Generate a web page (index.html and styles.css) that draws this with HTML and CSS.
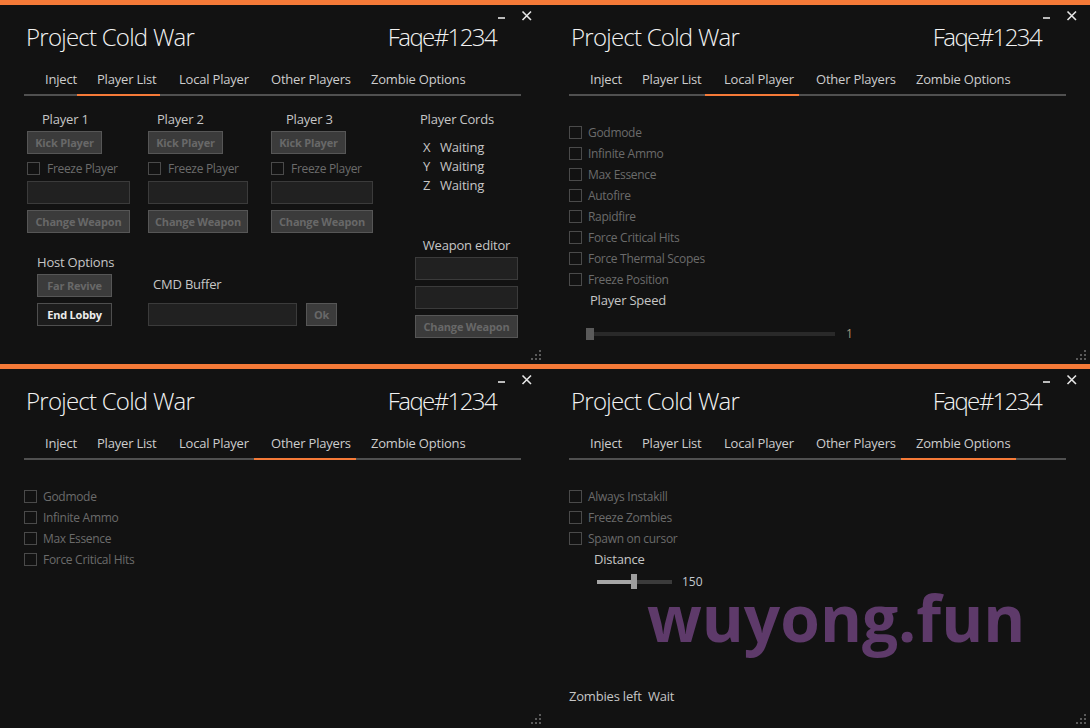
FILE: index.html
```html
<!DOCTYPE html>
<html>
<head>
<meta charset="utf-8">
<link rel="stylesheet" href="styles.css">
</head>
<body>
<div class="screen">

  <!-- Window 1: Player List -->
  <div class="win">
    <div class="wc"><svg width="36" height="17" viewBox="0 0 36 17"><line x1="2" y1="13" x2="9" y2="13" stroke="#e6e6e6" stroke-width="1.6"/><path d="M26.5 6.5 L35 15 M35 6.5 L26.5 15" stroke="#e6e6e6" stroke-width="1.6"/></svg></div>
    <div class="head"><span class="ttl">Project Cold War</span><span class="usr">Faqe#1234</span></div>
    <div class="tabs">
      <span class="tab">Inject</span><span class="tab on">Player List</span><span class="tab">Local Player</span><span class="tab">Other Players</span><span class="tab">Zombie Options</span>
    </div>
    <div class="pl">
      <div class="pl-main">
        <div class="players">
          <div class="pcol c1">
            <div class="lbl">Player 1</div>
            <div class="btn kick">Kick Player</div>
            <div class="ck tight"><span class="box"></span>Freeze Player</div>
            <div class="inp"></div>
            <div class="btn cw">Change Weapon</div>
          </div>
          <div class="pcol c2">
            <div class="lbl">Player 2</div>
            <div class="btn kick">Kick Player</div>
            <div class="ck tight"><span class="box"></span>Freeze Player</div>
            <div class="inp"></div>
            <div class="btn cw">Change Weapon</div>
          </div>
          <div class="pcol c3">
            <div class="lbl">Player 3</div>
            <div class="btn kick">Kick Player</div>
            <div class="ck tight"><span class="box"></span>Freeze Player</div>
            <div class="inp"></div>
            <div class="btn cw">Change Weapon</div>
          </div>
        </div>
        <div class="lower">
          <div class="host">
            <div class="lbl plain">Host Options</div>
            <div class="btn hbtn">Far Revive</div>
            <div class="btn hbtn live">End Lobby</div>
          </div>
          <div class="cmd">
            <div class="lbl cmdl">CMD Buffer</div>
            <div class="cmdrow"><div class="inp cmdin"></div><div class="btn ok">Ok</div></div>
          </div>
        </div>
      </div>
      <div class="side">
        <div class="lbl cords">Player Cords</div>
        <div class="coords">
          <div class="crow"><span class="ax">X</span>Waiting</div>
          <div class="crow"><span class="ax">Y</span>Waiting</div>
          <div class="crow"><span class="ax">Z</span>Waiting</div>
        </div>
        <div class="lbl wed">Weapon editor</div>
        <div class="inp w1"></div>
        <div class="inp w2"></div>
        <div class="btn w3">Change Weapon</div>
      </div>
    </div>
    <svg class="grip" width="12" height="12" viewBox="0 0 12 12"><g fill="#5a5a5a"><rect x="9" y="1" width="2" height="2"/><rect x="5" y="5" width="2" height="2"/><rect x="9" y="5" width="2" height="2"/><rect x="1" y="9" width="2" height="2"/><rect x="5" y="9" width="2" height="2"/><rect x="9" y="9" width="2" height="2"/></g></svg>
  </div>

  <!-- Window 2: Local Player -->
  <div class="win">
    <div class="wc"><svg width="36" height="17" viewBox="0 0 36 17"><line x1="2" y1="13" x2="9" y2="13" stroke="#e6e6e6" stroke-width="1.6"/><path d="M26.5 6.5 L35 15 M35 6.5 L26.5 15" stroke="#e6e6e6" stroke-width="1.6"/></svg></div>
    <div class="head"><span class="ttl">Project Cold War</span><span class="usr">Faqe#1234</span></div>
    <div class="tabs">
      <span class="tab">Inject</span><span class="tab">Player List</span><span class="tab on">Local Player</span><span class="tab">Other Players</span><span class="tab">Zombie Options</span>
    </div>
    <div class="checks">
      <div class="ck"><span class="box"></span>Godmode</div>
      <div class="ck"><span class="box"></span>Infinite Ammo</div>
      <div class="ck"><span class="box"></span>Max Essence</div>
      <div class="ck"><span class="box"></span>Autofire</div>
      <div class="ck"><span class="box"></span>Rapidfire</div>
      <div class="ck"><span class="box"></span>Force Critical Hits</div>
      <div class="ck"><span class="box"></span>Force Thermal Scopes</div>
      <div class="ck"><span class="box"></span>Freeze Position</div>
    </div>
    <div class="lbl speedl">Player Speed</div>
    <div class="slider speed">
      <span class="thumb"></span><span class="rest"></span><span class="val tan">1</span>
    </div>
    <svg class="grip" width="12" height="12" viewBox="0 0 12 12"><g fill="#5a5a5a"><rect x="9" y="1" width="2" height="2"/><rect x="5" y="5" width="2" height="2"/><rect x="9" y="5" width="2" height="2"/><rect x="1" y="9" width="2" height="2"/><rect x="5" y="9" width="2" height="2"/><rect x="9" y="9" width="2" height="2"/></g></svg>
  </div>

  <!-- Window 3: Other Players -->
  <div class="win">
    <div class="wc"><svg width="36" height="17" viewBox="0 0 36 17"><line x1="2" y1="13" x2="9" y2="13" stroke="#e6e6e6" stroke-width="1.6"/><path d="M26.5 6.5 L35 15 M35 6.5 L26.5 15" stroke="#e6e6e6" stroke-width="1.6"/></svg></div>
    <div class="head"><span class="ttl">Project Cold War</span><span class="usr">Faqe#1234</span></div>
    <div class="tabs">
      <span class="tab">Inject</span><span class="tab">Player List</span><span class="tab">Local Player</span><span class="tab on">Other Players</span><span class="tab">Zombie Options</span>
    </div>
    <div class="checks">
      <div class="ck"><span class="box"></span>Godmode</div>
      <div class="ck"><span class="box"></span>Infinite Ammo</div>
      <div class="ck"><span class="box"></span>Max Essence</div>
      <div class="ck"><span class="box"></span>Force Critical Hits</div>
    </div>
    <svg class="grip" width="12" height="12" viewBox="0 0 12 12"><g fill="#5a5a5a"><rect x="9" y="1" width="2" height="2"/><rect x="5" y="5" width="2" height="2"/><rect x="9" y="5" width="2" height="2"/><rect x="1" y="9" width="2" height="2"/><rect x="5" y="9" width="2" height="2"/><rect x="9" y="9" width="2" height="2"/></g></svg>
  </div>

  <!-- Window 4: Zombie Options -->
  <div class="win">
    <div class="wc"><svg width="36" height="17" viewBox="0 0 36 17"><line x1="2" y1="13" x2="9" y2="13" stroke="#e6e6e6" stroke-width="1.6"/><path d="M26.5 6.5 L35 15 M35 6.5 L26.5 15" stroke="#e6e6e6" stroke-width="1.6"/></svg></div>
    <div class="head"><span class="ttl">Project Cold War</span><span class="usr">Faqe#1234</span></div>
    <div class="tabs">
      <span class="tab">Inject</span><span class="tab">Player List</span><span class="tab">Local Player</span><span class="tab">Other Players</span><span class="tab on">Zombie Options</span>
    </div>
    <div class="checks">
      <div class="ck"><span class="box"></span>Always Instakill</div>
      <div class="ck"><span class="box"></span>Freeze Zombies</div>
      <div class="ck"><span class="box"></span>Spawn on cursor</div>
    </div>
    <div class="lbl distl">Distance</div>
    <div class="slider dist">
      <span class="fill"></span><span class="thumb big"></span><span class="rest short"></span><span class="val blu">150</span>
    </div>
    <div class="lbl zleft">Zombies left&nbsp; Wait</div>
    <div class="wm">wuyong.fun</div>
    <svg class="grip" width="12" height="12" viewBox="0 0 12 12"><g fill="#5a5a5a"><rect x="9" y="1" width="2" height="2"/><rect x="5" y="5" width="2" height="2"/><rect x="9" y="5" width="2" height="2"/><rect x="1" y="9" width="2" height="2"/><rect x="5" y="9" width="2" height="2"/><rect x="9" y="9" width="2" height="2"/></g></svg>
  </div>

</div>
</body>
</html>
```
FILE: styles.css
```css
* { box-sizing: border-box; }

body {
  margin: 0;
  background: #121212;
  font-family: "Open Sans", "Noto Sans", sans-serif;
}

.screen {
  display: grid;
  grid-template-columns: 545px 545px;
  grid-template-rows: 364px 364px;
  width: 1090px;
  height: 728px;
}

.win {
  position: relative;
  display: flex;
  flex-direction: column;
  background: #121212;
  border-top: 5px solid #f57a38;
  overflow: hidden;
}

/* window controls */
.wc {
  height: 17px;
  display: flex;
  justify-content: flex-end;
  padding-right: 13px;
}

.head {
  display: flex;
  justify-content: space-between;
  height: 30px;
  line-height: 30px;
  padding: 0 49px 0 26px;
  font-size: 24px;
  font-weight: 300;
  color: #f2f2f2;
  white-space: nowrap;
}
.ttl { letter-spacing: -0.75px; }
.usr { letter-spacing: -1.6px; }

/* tabs */
.tabs {
  display: flex;
  margin: 18px 24px 0;
  border-bottom: 2px solid #505050;
}

.tab {
  line-height: 18px;
  padding-bottom: 6px;
  border-bottom: 2px solid transparent;
  margin-bottom: -2px;
  font-size: 13px;
  color: #cdcdcd;
  white-space: nowrap;
  letter-spacing: -0.2px;
}
.tab:nth-child(1) { width: 53px; padding-left: 21px; }
.tab:nth-child(2) { width: 83px; padding-left: 20px; }
.tab:nth-child(3) { width: 94px; padding-left: 19px; }
.tab:nth-child(4) { width: 102px; padding-left: 17px; }
.tab:nth-child(5) { width: 115px; padding-left: 15px; }
.tab.on { border-bottom-color: #f57a38; }

/* generic text */
.lbl {
  line-height: 18px;
  font-size: 13px;
  color: #c6c6c6;
  white-space: nowrap;
  letter-spacing: -0.2px;
}

/* checkboxes */
.checks { padding: 26px 0 0 24px; }

.ck {
  display: flex;
  align-items: center;
  height: 21px;
  font-size: 12px;
  color: #6b6b6b;
  white-space: nowrap;
  letter-spacing: -0.3px;
}
.box {
  flex: none;
  width: 13px;
  height: 13px;
  border: 1px solid #4a4a4a;
  margin-right: 6px;
}
.ck.tight { height: 13px; margin-top: 8px; }
.ck.tight .box { margin-right: 7px; }

/* buttons / inputs */
.btn {
  height: 23px;
  display: flex;
  align-items: center;
  justify-content: center;
  background: #3b3b3b;
  border: 1px solid #565656;
  color: #686868;
  font-size: 11px;
  font-weight: 700;
  white-space: nowrap;
  letter-spacing: -0.2px;
}
.btn.live {
  background: #1c1c1c;
  border-color: #4e4e4e;
  color: #ececec;
}
.inp {
  height: 23px;
  background: #212121;
  border: 1px solid #3b3b3b;
}

/* Player list panel */
.pl {
  display: flex;
  padding: 14px 0 0 27px;
}
.players { display: flex; }
.pcol .lbl { padding-left: 15px; }
.c1 { width: 103px; }
.c2 { width: 100px; margin-left: 18px; }
.c2 .lbl { padding-left: 9px; }
.c3 { width: 102px; margin-left: 23px; }
.kick { width: 75px; margin-top: 3px; }
.pcol .inp { margin-top: 6px; }
.cw { margin-top: 6px; }

.lower { display: flex; margin-top: 20px; }
.host { margin-left: 10px; width: 76px; }
.hbtn { width: 75px; margin-top: 3px; }
.hbtn.live { margin-top: 6px; }
.cmd { margin-left: 35px; }
.cmdl { padding-left: 5px; margin-top: 22px; }
.cmdrow { display: flex; margin-top: 10px; }
.cmdin { width: 149px; }
.ok { width: 31px; margin-left: 9px; }

.side { margin-left: 42px; width: 103px; }
.cords { padding-left: 5px; }
.coords { margin-top: 10px; padding-left: 8px; }
.crow {
  display: flex;
  line-height: 19px;
  font-size: 13px;
  color: #c6c6c6;
  letter-spacing: -0.2px;
}
.ax { width: 17px; }
.wed { text-align: center; margin-top: 41px; }
.w1 { margin-top: 3px; }
.w2 { margin-top: 6px; }
.w3 { margin-top: 6px; }

/* sliders */
.speedl { margin: 1px 0 0 45px; }
.slider {
  display: flex;
  align-items: center;
}
.speed { margin: 18px 0 0 41px; height: 14px; }
.thumb {
  flex: none;
  width: 8px;
  height: 12px;
  background: #5a5a5a;
}
.rest {
  width: 241px;
  height: 4px;
  background: #292929;
}
.val {
  font-size: 12px;
  line-height: 14px;
  margin-left: 11px;
}
.tan { color: #a8977a; }
.blu { color: #c2c8d0; margin-left: 10px; }

.distl { margin: 1px 0 0 49px; }
.dist { margin: 6px 0 0 52px; height: 15px; }
.fill { width: 34px; height: 4px; background: #a6a6a6; }
.thumb.big { width: 6px; height: 15px; background: #9e9e9e; }
.rest.short { width: 35px; background: #3b3b3b; }

.zleft { margin-top: auto; margin-bottom: 23px; margin-left: 24px; }

/* overlays */
.wm {
  position: absolute;
  left: 102px;
  top: 225px;
  font-size: 64px;
  line-height: 48px;
  font-weight: 700;
  color: #5e3a6a;
  white-space: nowrap;
}

.grip {
  position: absolute;
  right: 3px;
  bottom: 3px;
}
```
